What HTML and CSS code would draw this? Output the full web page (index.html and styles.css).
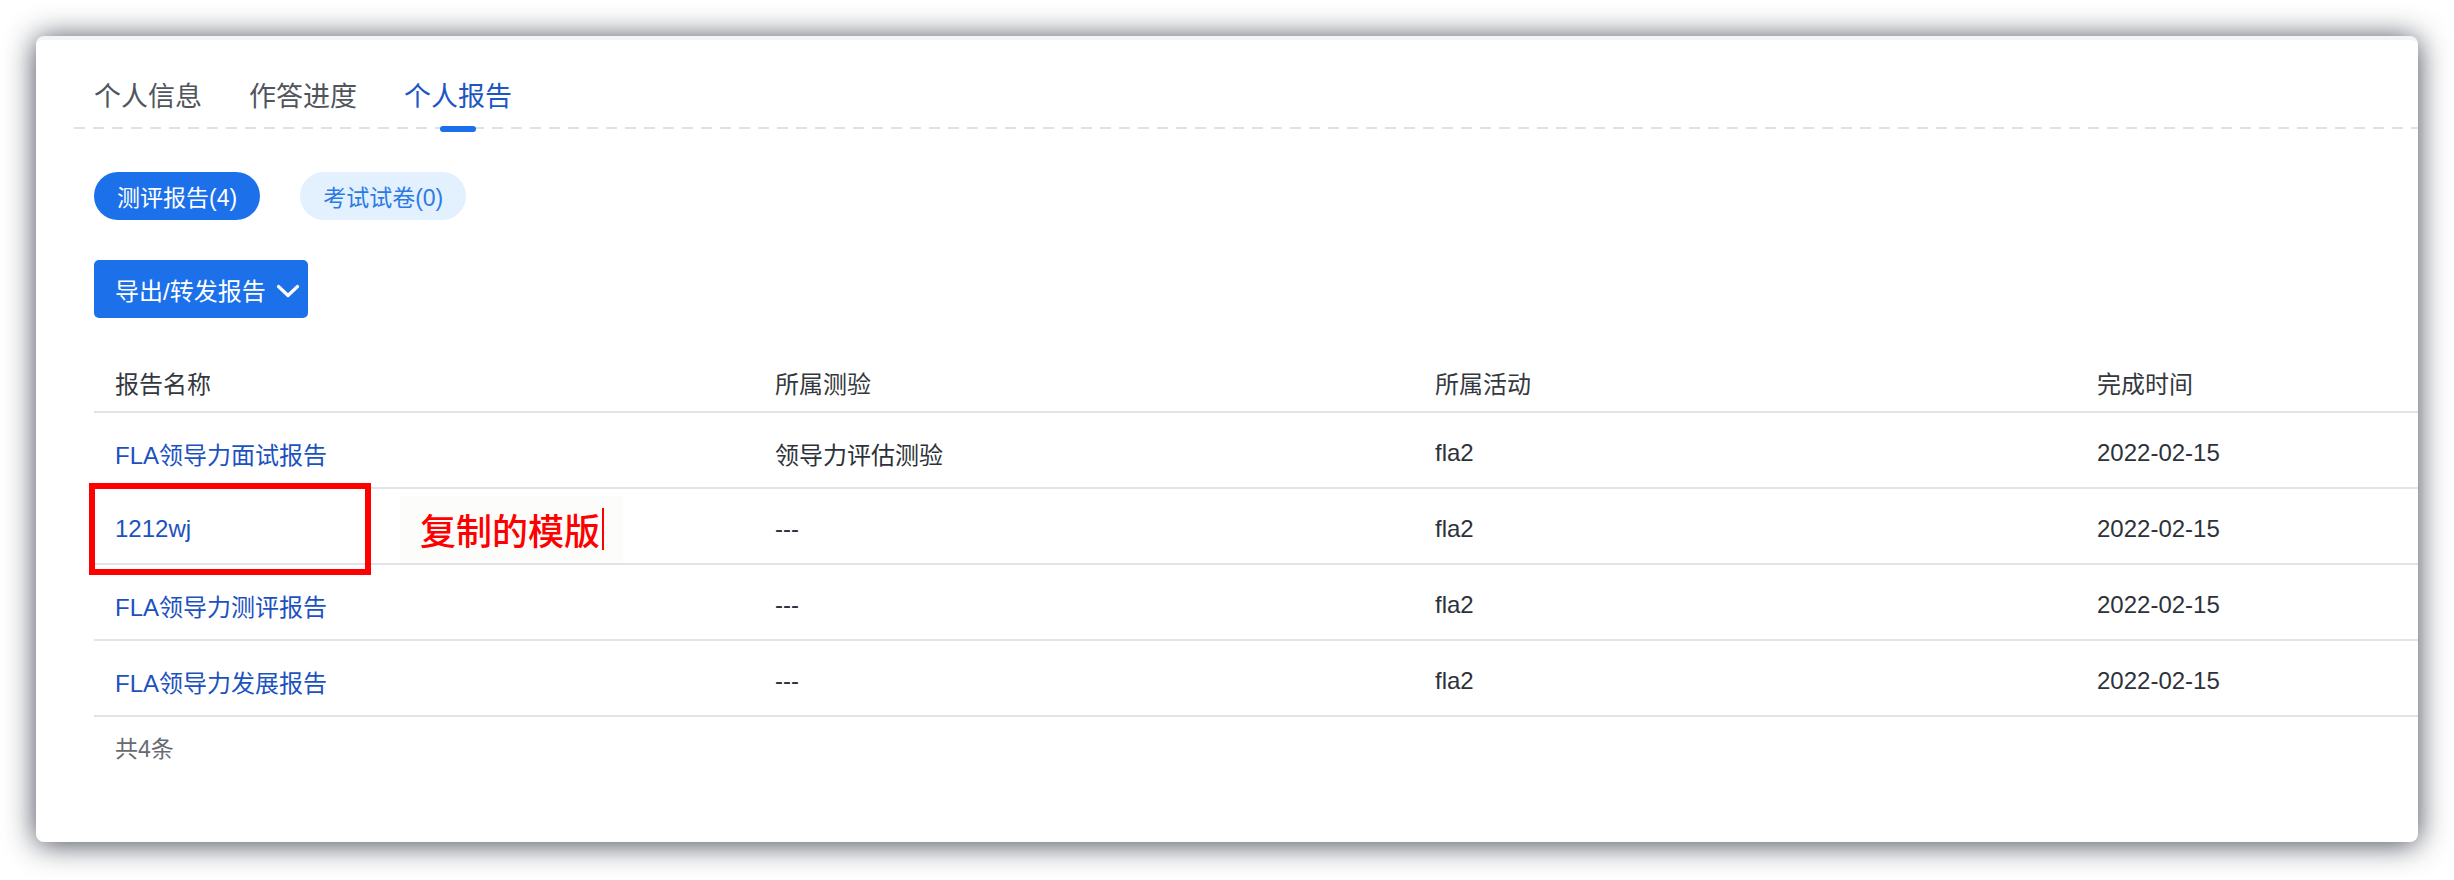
FILE: index.html
```html
<!DOCTYPE html>
<html lang="zh-CN">
<head>
<meta charset="utf-8">
<title>个人报告</title>
<link rel="stylesheet" href="styles.css">
</head>
<body>
<div class="card">
  <div class="tabs">
    <div class="tab">个人信息</div>
    <div class="tab">作答进度</div>
    <div class="tab active">个人报告</div>
  </div>
  <div class="content">
    <div class="pills">
      <span class="pill pill-active">测评报告(4)</span>
      <span class="pill pill-light">考试试卷(0)</span>
    </div>
    <div class="actions">
      <button class="btn">导出/转发报告<svg class="chev" width="24" height="14" viewBox="0 0 24 14"><path d="M2.5 2.5 L12 11.5 L21.5 2.5" fill="none" stroke="#fff" stroke-width="3.2" stroke-linecap="round" stroke-linejoin="round"/></svg></button>
    </div>
    <div class="table">
      <div class="row head">
        <div class="cell">报告名称</div>
        <div class="cell">所属测验</div>
        <div class="cell">所属活动</div>
        <div class="cell">完成时间</div>
      </div>
      <div class="row">
        <div class="cell link">FLA领导力面试报告</div>
        <div class="cell">领导力评估测验</div>
        <div class="cell">fla2</div>
        <div class="cell">2022-02-15</div>
      </div>
      <div class="row">
        <div class="cell link">1212wj</div>
        <div class="cell">---</div>
        <div class="cell">fla2</div>
        <div class="cell">2022-02-15</div>
      </div>
      <div class="row">
        <div class="cell link">FLA领导力测评报告</div>
        <div class="cell">---</div>
        <div class="cell">fla2</div>
        <div class="cell">2022-02-15</div>
      </div>
      <div class="row">
        <div class="cell link">FLA领导力发展报告</div>
        <div class="cell">---</div>
        <div class="cell">fla2</div>
        <div class="cell">2022-02-15</div>
      </div>
    </div>
    <div class="total">共4条</div>
  </div>
  <div class="mark-box"></div>
  <div class="mark-note"><span class="mark-text">复制的模版</span><span class="caret"></span></div>
</div>
</body>
</html>
```
FILE: styles.css
```css
* { box-sizing: border-box; }
html, body { margin: 0; padding: 0; background: #ffffff; }
body {
  width: 2454px;
  height: 880px;
  overflow: hidden;
  padding: 36px;
  font-family: "Liberation Sans", "Noto Sans CJK SC", sans-serif;
}
.card {
  position: relative;
  width: 2382px;
  height: 806px;
  background: #ffffff;
  border-radius: 8px;
  border-top: 4px solid #f2f4f5;
  box-shadow: 0 2px 30px rgba(30, 36, 52, 0.85);
  overflow: hidden;
}
.tabs {
  display: flex;
  gap: 47px;
  margin-left: 38px;
  padding: 35px 0 2px 20px;
  background-image: repeating-linear-gradient(to right, #dae2ea 0 11px, transparent 11px 19px);
  background-size: 100% 2px;
  background-position: left bottom;
  background-repeat: no-repeat;
}
.tab {
  position: relative;
  font-family: "Noto Sans CJK SC", sans-serif;
  font-size: 27px;
  line-height: 40px;
  height: 52px;
  padding-bottom: 12px;
  color: #50555c;
}
.tab.active { color: #1d57c4; }
.tab.active::after {
  content: "";
  position: absolute;
  left: 50%;
  top: calc(100% - 1px);
  width: 36px;
  height: 6px;
  margin-left: -18px;
  border-radius: 3px;
  background: #1c6fe8;
}
.content { padding-left: 58px; }
.pills {
  display: flex;
  gap: 40px;
  margin-top: 43px;
}
.pill {
  display: inline-flex;
  align-items: center;
  height: 48px;
  padding: 0 23px;
  border-radius: 24px;
  font-size: 23px;
}
.pill-active { background: #1c70ea; color: #ffffff; }
.pill-light { background: #e3f0fe; color: #2c7be5; }
.actions { margin-top: 40px; display: flex; }
.btn {
  display: inline-flex;
  align-items: center;
  gap: 10px;
  height: 58px;
  padding: 0 8px 0 21px;
  border: none;
  border-radius: 5px;
  background: #1c70ea;
  color: #ffffff;
  font-family: "Liberation Sans", "Noto Sans CJK SC", sans-serif;
  font-size: 24px;
}
.chev { display: block; margin-top: 3px; }
.table { margin-top: 30px; }
.row {
  display: grid;
  grid-template-columns: 660px 660px 662px 1fr;
  height: 76px;
  border-bottom: 2px solid #e0e4e9;
  padding-top: 6px;
  align-items: center;
  font-size: 24px;
  color: #2d323a;
}
.row.head {
  height: 65px;
  color: #34383e;
}
.cell { padding-left: 21px; white-space: nowrap; }
.cell.link { color: #1c52bf; }
.total {
  margin-top: 16px;
  padding-left: 21px;
  line-height: 32px;
  font-size: 23px;
  color: #666b72;
}
.mark-box {
  position: absolute;
  left: 53px;
  top: 443px;
  width: 282px;
  height: 92px;
  border: 6px solid #ff0000;
}
.mark-note {
  position: absolute;
  left: 364px;
  top: 456px;
  width: 223px;
  height: 66px;
  padding-left: 20px;
  display: flex;
  align-items: center;
  background: #fcfcfb;
}
.mark-text {
  font-family: "Noto Sans CJK SC", sans-serif;
  font-weight: 500;
  font-size: 36px;
  line-height: 40px;
  color: #ff0000;
}
.caret {
  display: block;
  width: 2px;
  height: 42px;
  margin-left: 2px;
  background: #ff0000;
}
```
